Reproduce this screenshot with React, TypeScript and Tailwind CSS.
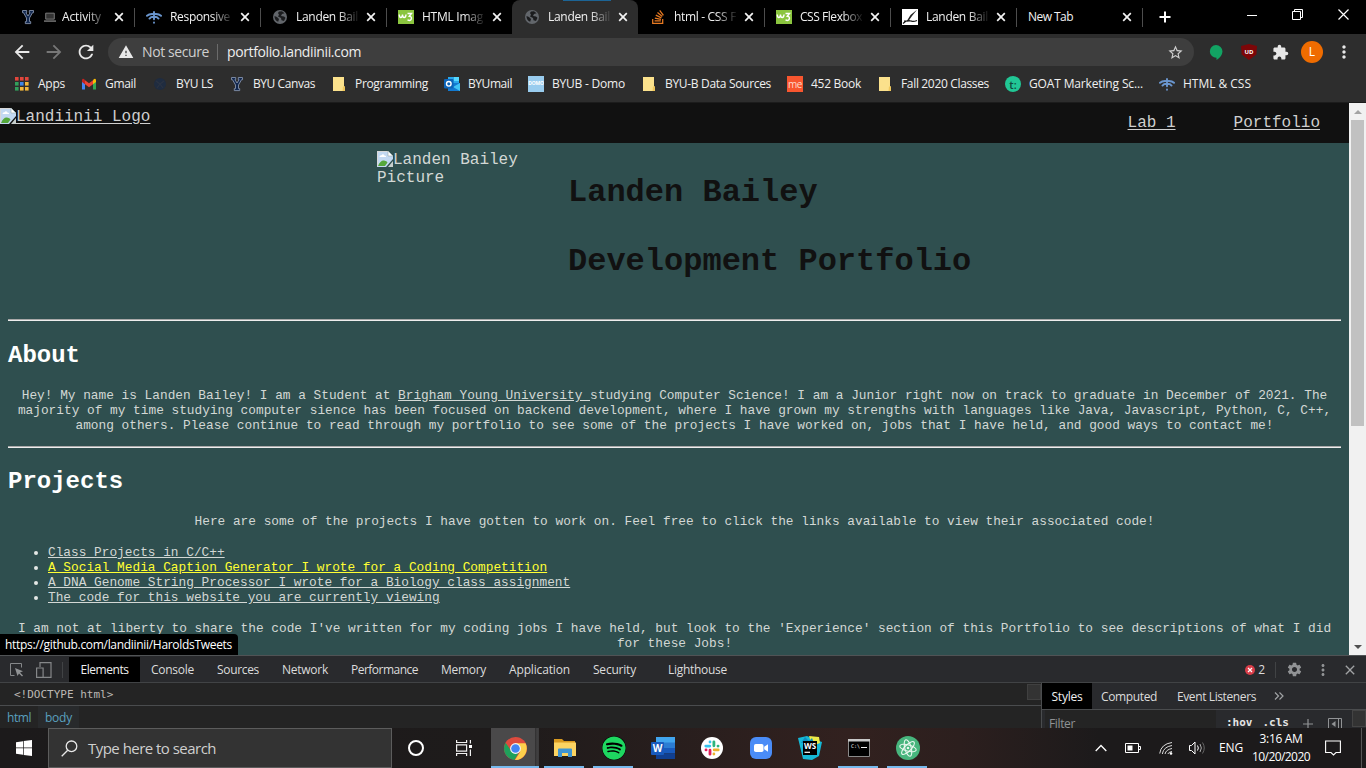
import React, { useLayoutEffect, useRef, useState } from "react";
import { MdArrowBack, MdArrowForward, MdRefresh, MdWarning, MdStarBorder, MdExtension, MdMoreVert, MdSettings, MdClose } from "react-icons/md";
import { FaSpotify, FaStackOverflow } from "react-icons/fa";

/* Spreads a single line of text over the width of its box by adjusting letter spacing. */
function Fit({ children, className = "" }: { children: string; className?: string }) {
  const box = useRef<HTMLSpanElement>(null);
  const text = useRef<HTMLSpanElement>(null);
  const [spacing, setSpacing] = useState(0);
  useLayoutEffect(() => {
    if (!box.current || !text.current) return;
    const natural = text.current.getBoundingClientRect().width;
    const target = box.current.getBoundingClientRect().width;
    setSpacing((target - natural) / children.length);
  }, [children]);
  return (
    <span ref={box} className={`block shrink-0 whitespace-nowrap ${className}`}>
      <span ref={text} style={{ letterSpacing: spacing }}>{children}</span>
    </span>
  );
}

const Yicon = () => (
  <svg viewBox="0 0 16 16" className="h-4 w-4">
    <path d="M2.500 1.500h4.200v2.200h-.8L8 7l2.100-3.300h-.8V1.500h4.200v2.200h-1L9.500 9v3.600h1.200v2H5.300v-2h1.200V9L3.500 3.700h-1z" fill="#12284f" stroke="#8492ab" strokeWidth=".9" />
  </svg>
);
const Signal = () => (
  <svg viewBox="0 0 16 16" className="h-4 w-4" fill="none" stroke="#6a96cf" strokeWidth="1.900" strokeLinecap="round">
    <path d="M1 6.800Q3.500 4.500 8 5.200M15 6.800Q12.500 4.500 8 5.200M3.500 9.600Q5 7.600 8 7.800M12.500 9.600Q11 7.600 8 7.800M8 3v7.200M8 13.500v.3" />
  </svg>
);
const Globe = () => (
  <svg viewBox="0 0 16 16" className="h-4 w-4">
    <circle cx="8" cy="8" r="7" fill="#62666b" />
    <path d="M2.500 7l2.500 1 2 2-.8 2.800C4 12 2.300 9.800 2.500 7zM7 2.600l3-.4 2.600 2-2.600.8-1 2 3 .5 1.500 1.300-1.500 3.200-2.500-.8L9 9 6 7.500l1-1.800L6 4z" fill="#1b1c1e" />
  </svg>
);
const W3 = () => (
  <svg viewBox="0 0 16 16" className="h-4 w-4">
    <rect y="1" width="16" height="14" fill="#8bc53f" />
    <path d="M1.300 5.500q0 3 1.500 3T4.500 5.500q0 3 1.700 3T8 5.500M9.500 4.500h4l-2.200 2.700q2.800.3 2 2.900-.8 2.200-3.800.8" fill="none" stroke="#fff" strokeWidth="1.400" />
  </svg>
);
const Brush = () => (
  <svg viewBox="0 0 16 16" className="h-4 w-4">
    <rect width="16" height="16" fill="#fff" />
    <path d="M1 14.500q4-4 7-2.700t7-.3M2 12h8" fill="none" stroke="#111" strokeWidth="1.200" />
    <path d="M15 .8L8.500 6l-4 6.500 1.800-.3L10 7z" fill="#222" />
  </svg>
);
const Folder = () => (
  <svg viewBox="0 0 16 16" className="h-4 w-4">
    <path d="M2 1h11v9.500h1V15H2z" fill="#fbe18c" />
    <path d="M12 10.500h2V15h-2.500z" fill="#efc75b" />
  </svg>
);
const AppsIcon = () => (
  <svg viewBox="0 0 16 16" className="h-4 w-4">
    {["#e2463c", "#e2463c", "#e2463c", "#32a05b", "#3f86e8", "#f2b63b", "#32a05b", "#f2b63b", "#f2b63b"].map((c, i) => (
      <rect key={i} x={1 + (i % 3) * 5} y={1 + Math.floor(i / 3) * 5} width="3.600" height="3.600" fill={c} />
    ))}
  </svg>
);
const Gmail = () => (
  <svg viewBox="0 0 16 16" className="h-4 w-4">
    <path d="M1 5v8.500h3V7.500z" fill="#4285f4" />
    <path d="M15 5v8.500h-3V7.500z" fill="#34a853" />
    <path d="M4 4.200v4l4 3 4-3v-4l-4 3z" fill="#ea4335" />
    <path d="M1 4.200Q1 2 3 3l1 1.200v4L1 6z" fill="#c5221f" />
    <path d="M15 4.200Q15 2 13 3l-1 1.200v4L15 6z" fill="#fbbc04" />
  </svg>
);
const LsIcon = () => (
  <svg viewBox="0 0 16 16" className="h-4 w-4">
    <circle cx="8" cy="8" r="6" fill="#1f2c40" />
    <path d="M4 5l4 3 4-3M5 12l3-4 3 4" fill="none" stroke="#2b3342" strokeWidth="1.200" />
  </svg>
);
const Outlook = () => (
  <svg viewBox="0 0 16 16" className="h-4 w-4">
    <path d="M4 1h11v7H4z" fill="#2aa7ea" />
    <path d="M10 1h5v4h-5z" fill="#55d8ff" />
    <path d="M4 7h12v8H4z" fill="#1279d0" />
    <path d="M16 7v8l-7-4z" fill="#3fc3f5" />
    <rect y="3" width="9.500" height="9.500" rx="1" fill="#0c64b8" />
    <circle cx="4.800" cy="7.800" r="2.300" fill="none" stroke="#fff" strokeWidth="1.400" />
  </svg>
);
const Domo = () => (
  <span className="flex h-4 w-4 items-center justify-center overflow-hidden bg-[#99ccee] text-[5px] font-bold tracking-[-0.2px] text-white">DOMO</span>
);
const Me = () => (
  <span className="flex h-4 w-4 items-center justify-center overflow-hidden bg-[#f8562f] text-[10px] leading-none tracking-[-0.5px] text-[#ffd8cc]">me</span>
);
const Goat = () => (
  <span className="flex h-4 w-4 items-center justify-center rounded-full bg-[#21c795] text-[11px] leading-none font-semibold text-[#114a3d]">t:</span>
);
const Broken = () => (
  <svg viewBox="0 0 16 16" className="inline-block h-4 w-4 align-baseline">
    <path d="M0 0h11l5 5v3L9 16H0z" fill="#c3d9f2" />
    <path d="M.5 15.500V.5H11" fill="none" stroke="#d8d8d8" />
    <path d="M11 0v5h5z" fill="#fff" stroke="#9aa" strokeWidth=".6" />
    <path d="M2.500 6q0-2 2-1.800Q6 2 7.500 4.500 9.500 4.500 9 6z" fill="#fff" />
    <path d="M1 15q2.500-6 6-5.500 3 .5 3.500 2L8 15z" fill="#55a83c" />
    <path d="M16 10v6h-5z" fill="#c7cfce" />
  </svg>
);

const tabs = [
  { icon: <Yicon />, title: "Activity", w: "w-[39px]", laptop: true, sep: true },
  { icon: <Signal />, title: "Responsive", w: "w-[60px]", sep: true },
  { icon: <Globe />, title: "Landen Bail", w: "w-[62px]", sep: true },
  { icon: <W3 />, title: "HTML Imag", w: "w-[61px]" },
  { icon: <Globe />, title: "Landen Bail", w: "w-[62px]", active: true },
  { icon: <FaStackOverflow className="h-4 w-3.5 text-[#e87a22]" />, title: "html - CSS F", w: "w-[62px]", sep: true },
  { icon: <W3 />, title: "CSS Flexbox", w: "w-[62px]", sep: true },
  { icon: <Brush />, title: "Landen Bail", w: "w-[62px]", sep: true },
  { icon: null, title: "New Tab", w: "w-[45px]", sep: true },
];

const X = ({ className = "" }: { className?: string }) => (
  <svg viewBox="0 0 10 10" className={`h-2.5 w-2.5 shrink-0 ${className}`}><path d="M1.200 1.200l7.600 7.600M8.800 1.200L1.200 8.800" stroke="#f4f4f4" strokeWidth="1.700" /></svg>
);

function TabStrip() {
  return (
    <div className="flex h-[34px] shrink-0 bg-black pl-2">
      {tabs.map((t, i) => (
        <div key={i} className={`relative flex w-[126px] shrink-0 items-center pl-3 ${t.active ? "rounded-t-lg bg-[#2d2d2d]" : ""}`}>
          {t.active && <span className="absolute top-0 left-[51px] h-px w-[48px] bg-[#1c6495]" />}
          {t.icon && <span className="mr-2 flex w-4 shrink-0 justify-center">{t.icon}</span>}
          <span className={`flex w-[62px] items-center ${t.icon ? "[mask-image:linear-gradient(to_right,black_42px,transparent_64px)]" : ""}`}>
            {t.laptop && (
              <svg viewBox="0 0 14 12" className="mr-1.5 h-3 w-3 shrink-0"><path d="M2 1.500h10v7H2z" fill="#333" stroke="#888" /><path d="M0 10h14v1.500H0z" fill="#888" /></svg>
            )}
            <Fit className={`text-[12px] text-[#f1f1f1] ${t.w}`}>{t.title}</Fit>
          </span>
          <X className={t.icon ? "ml-2" : "ml-8"} />
          {t.sep && <span className="absolute top-2 right-[-1px] h-[19px] w-px bg-[#4d4d4d]" />}
        </div>
      ))}
      <div className="flex w-[45px] items-center justify-center">
        <svg viewBox="0 0 12 12" className="h-3 w-3"><path d="M6 .5v11M.5 6h11" stroke="#fff" strokeWidth="2" /></svg>
      </div>
      <div className="ml-auto flex h-[29px] items-center gap-[35px] pr-[17px]">
        <svg viewBox="0 0 10 10" className="h-2.5 w-2.5"><path d="M0 5.500h10" stroke="#fff" /></svg>
        <svg viewBox="0 0 11 11" className="h-[11px] w-[11px]" fill="none" stroke="#fff"><path d="M.5 2.500h8v8h-8zM2.500 2.500v-2h8v8h-2" /></svg>
        <svg viewBox="0 0 11 11" className="h-[11px] w-[11px]"><path d="M.5.5l10 10M10.500.5l-10 10" stroke="#fff" strokeWidth="1.200" /></svg>
      </div>
    </div>
  );
}

function Toolbar() {
  return (
    <div className="flex h-[36px] shrink-0 items-center bg-[#2d2d2d] pl-[11px] text-[#e8e8e8]">
      <MdArrowBack size={22} />
      <MdArrowForward size={22} className="ml-[10px] text-[#777]" />
      <MdRefresh size={22} className="ml-[10px]" />
      <div className="ml-[11px] flex h-7 w-[1086px] items-center rounded-full bg-[#3e3e3e] pl-[10px] text-[14px]">
        <MdWarning size={16} />
        <Fit className="-mt-px ml-2 w-[67px] text-[#cfcfcf]">Not secure</Fit>
        <span className="mr-[9px] ml-2 h-4 w-px bg-[#6b6b6b]" />
        <Fit className="-mt-px w-[134px] text-[#ededed]">portfolio.landiinii.com</Fit>
        <MdStarBorder size={17} className="mr-[10px] ml-auto text-[#cfcfcf]" />
      </div>
      <svg viewBox="0 0 14 17" className="ml-[15px] h-[17px] w-3.5"><path d="M7 1a6.500 6.500 0 0 1 6.500 6.500Q13 13 7.500 16v-2.200A6.400 6.400 0 1 1 7 1z" fill="#12a363" /></svg>
      <span className="ml-[18px] flex h-4 w-4 items-center justify-center bg-[#7c0608] text-[6px] font-bold text-white [clip-path:polygon(0_12%,50%_0,100%_12%,96%_65%,50%_100%,4%_65%)]">UD</span>
      <MdExtension size={17} className="ml-[15px]" />
      <span className="ml-3 flex h-[22px] w-[22px] items-center justify-center rounded-full bg-[#ef6c00] text-[12px] text-white">L</span>
      <MdMoreVert size={20} className="ml-[11px]" />
    </div>
  );
}

const bookmarks = [
  { icon: <AppsIcon />, t: "Apps", w: "w-[27px]" },
  { icon: <Gmail />, t: "Gmail", w: "w-[31px]" },
  { icon: <LsIcon />, t: "BYU LS", w: "w-[37px]" },
  { icon: <Yicon />, t: "BYU Canvas", w: "w-[62px]" },
  { icon: <Folder />, t: "Programming", w: "w-[73px]" },
  { icon: <Outlook />, t: "BYUmail", w: "w-[44px]" },
  { icon: <Domo />, t: "BYUB - Domo", w: "w-[73px]" },
  { icon: <Folder />, t: "BYU-B Data Sources", w: "w-[106px]" },
  { icon: <Me />, t: "452 Book", w: "w-[50px]" },
  { icon: <Folder />, t: "Fall 2020 Classes", w: "w-[88px]" },
  { icon: <Goat />, t: "GOAT Marketing Sc...", w: "w-[114px]" },
  { icon: <Signal />, t: "HTML & CSS", w: "w-[68px]" },
];

function Bookmarks() {
  return (
    <div className="flex h-[33px] shrink-0 items-center gap-4 border-b border-[#1c1c1c] bg-[#2d2d2d] pb-1 pl-3.5 text-[12px] text-[#f0f0f0]">
      {bookmarks.map((b) => (
        <div key={b.t} className="flex shrink-0 items-center gap-2">{b.icon}<Fit className={b.w}>{b.t}</Fit></div>
      ))}
    </div>
  );
}

const Rule = () => <hr className="h-[2px] border-0 border-t border-b border-t-[#a8a8a8] border-b-[#eeeeee]" />;

function Site() {
  return (
    <div className="relative flex h-[552px] shrink-0 overflow-hidden bg-[#2f4f4f] font-['Courier_New','Liberation_Mono',monospace] text-[#d3d8d5]">
      <div className="w-[1349px] shrink-0">
        <header className="flex h-10 justify-between bg-[#111] text-[16px] leading-[18px] text-[#cfcfcf]">
          <a className="flex pt-[5px] underline underline-offset-2"><Broken /><span>Landiinii Logo</span></a>
          <nav className="flex gap-[58px] pt-[11px] pr-[29px]">
            <a className="underline underline-offset-2">Lab 1</a>
            <a className="underline underline-offset-2">Portfolio</a>
          </nav>
        </header>
        <div className="px-2">
          <section className="flex h-[176px] pl-[369px]">
            <div className="w-[191px] pt-2 text-[16px] leading-[18px]">
              <div className="flex"><Broken /><span>Landen Bailey</span></div>
              <div>Picture</div>
            </div>
            <div className="pt-8 text-[32px] leading-9 font-bold text-[#111]">
              <h1>Landen Bailey</h1>
              <h1 className="mt-[33px]">Development Portfolio</h1>
            </div>
          </section>
          <Rule />
          <h2 className="mt-[21px] text-[24px] leading-[27px] font-bold text-white">About</h2>
          <p className="mt-[19px] text-center text-[12.8px] leading-[15px]">
            Hey! My name is Landen Bailey! I am a Student at <a className="underline">Brigham Young University </a>studying Computer Science! I am a Junior right now on track to graduate in December of 2021. The majority of my time studying computer sience has been focused on backend development, where I have grown my strengths with languages like Java, Javascript, Python, C, C++, among others. Please continue to read through my portfolio to see some of the projects I have worked on, jobs that I have held, and good ways to contact me!
          </p>
          <div className="mt-[13px]"><Rule /></div>
          <h2 className="mt-5 text-[24px] leading-[27px] font-bold text-white">Projects</h2>
          <p className="mt-[19px] text-center text-[12.8px] leading-[15px]">Here are some of the projects I have gotten to work on. Feel free to click the links available to view their associated code!</p>
          <ul className="mt-4 text-[12.8px] leading-[15px]">
            {[
              "Class Projects in C/C++",
              "A Social Media Caption Generator I wrote for a Coding Competition",
              "A DNA Genome String Processor I wrote for a Biology class assignment",
              "The code for this website you are currently viewing",
            ].map((t, i) => (
              <li key={t} className="flex items-center pl-[26px]">
                <span className="mr-[10px] h-1 w-1 rounded-full bg-[#e4e8e6]" />
                <a className={i === 1 ? "text-[#ffff33] underline" : "underline"}>{t}</a>
              </li>
            ))}
          </ul>
          <p className="mt-4 text-center text-[12.8px] leading-[15px]">I am not at liberty to share the code I've written for my coding jobs I have held, but look to the 'Experience' section of this Portfolio to see descriptions of what I did for these Jobs!</p>
        </div>
      </div>
      <div className="flex w-[17px] flex-col items-center bg-[#f1f1f1]">
        <span className="flex h-[17px] items-center"><svg viewBox="0 0 8 4" className="h-1 w-2"><path d="M0 4l4-4 4 4z" fill="#a3a3a3" /></svg></span>
        <span className="h-[306px] w-[13px] bg-[#c1c1c1]" />
        <span className="mt-auto flex h-[17px] items-center"><svg viewBox="0 0 8 4" className="h-1 w-2"><path d="M0 0l4 4 4-4z" fill="#505050" /></svg></span>
      </div>
      <div className="absolute bottom-0 left-0 flex h-[21px] w-[238px] items-center rounded-tr bg-black pl-[5px] font-['Open_Sans','Noto_Sans',sans-serif] text-[12px] text-white">
        <Fit className="w-[227px]">https://github.com/landiinii/HaroldsTweets</Fit>
      </div>
    </div>
  );
}

const devTabs = [
  ["Console", "w-[43px]", "ml-[11px]"],
  ["Sources", "w-[42px]", "ml-[23px]"],
  ["Network", "w-[46px]", "ml-[23px]"],
  ["Performance", "w-[67px]", "ml-[23px]"],
  ["Memory", "w-[45px]", "ml-[23px]"],
  ["Application", "w-[61px]", "ml-[23px]"],
  ["Security", "w-[43px]", "ml-[23px]"],
  ["Lighthouse", "w-[59px]", "ml-[32px]"],
];

function DevTools() {
  return (
    <div className="flex h-[73px] shrink-0 flex-col overflow-hidden border-t border-[#505355] bg-[#242424] text-[12px] text-[#dcdcdc]">
      <div className="flex h-[27px] shrink-0 items-center border-b border-[#414345] bg-[#292a2d] pt-px">
        <svg viewBox="0 0 14 14" className="ml-[10px] h-3.5 w-3.5"><path d="M4.500 12.500h-4V.5h11v4" fill="none" stroke="#858789" /><path d="M5 5l8 3.200-3 1.300 3 3-1 1-3-3L7.500 13z" fill="#919395" /></svg>
        <svg viewBox="0 0 16 16" className="ml-3 h-4 w-4" fill="none" stroke="#858789" strokeWidth="1.200"><path d="M4 5V.6h11v14.800H7.500M.6 6h6.500v9.400H.6z" /></svg>
        <span className="ml-[10px] h-4 w-px bg-[#414345]" />
        <div className="ml-[6px] flex h-full w-[71px] items-center justify-center bg-black pt-px"><Fit className="w-[48px] text-[#f0f0f0]">Elements</Fit></div>
        {devTabs.map(([t, w, m]) => <Fit key={t} className={`pt-px ${w} ${m}`}>{t}</Fit>)}
        <svg viewBox="0 0 10 10" className="ml-auto h-2.5 w-2.5"><circle cx="5" cy="5" r="5" fill="#d93d49" /><path d="M3 3l4 4M7 3L3 7" stroke="#fff" strokeWidth="1.200" /></svg>
        <span className="ml-[3px] pt-px">2</span>
        <span className="ml-[10px] h-4 w-px bg-[#414345]" />
        <MdSettings size={17} className="ml-[10px] text-[#919395]" />
        <MdMoreVert size={18} className="ml-[11px] text-[#919395]" />
        <MdClose size={16} className="mr-2 ml-[10px] text-[#a0a2a4]" />
      </div>
      <div className="flex h-[46px]">
        <div className="flex w-[1042px] shrink-0 flex-col border-r border-[#4a4c4e]">
          <div className="flex h-[23px] justify-between border-b border-[#4a4c4e] font-['DejaVu_Sans_Mono',monospace] text-[11px] leading-[23px] text-[#bdb9b4]">
            <span className="pl-3.5">&lt;!DOCTYPE html&gt;</span>
            <span className="mt-px h-4 w-[14px] border border-[#404040] bg-[#333]" />
          </div>
          <div className="flex h-[23px] items-center text-[#5aa0bf]">
            <Fit className="ml-[7px] w-[24px] pt-px">html</Fit>
            <span className="ml-[7px] flex h-full w-[41px] items-center justify-center bg-[#282a2c] pt-px"><Fit className="w-[27px]">body</Fit></span>
          </div>
        </div>
        <div className="flex flex-1 flex-col bg-[#292a2d]">
          <div className="flex h-[27px] shrink-0 items-center border-b border-[#4a4c4e]">
            <span className="flex h-full w-[50px] items-center justify-center bg-black pt-0.5"><Fit className="w-[31px] text-[#f0f0f0]">Styles</Fit></span>
            <Fit className="ml-[9px] w-[56px] pt-0.5">Computed</Fit>
            <Fit className="ml-5 w-[79px] pt-0.5">Event Listeners</Fit>
            <svg viewBox="0 0 10 8" className="ml-[18px] h-2 w-2.5" fill="none" stroke="#a0a2a4" strokeWidth="1.200"><path d="M1 .5L4.500 4 1 7.500M5.500.5L9 4 5.500 7.500" /></svg>
          </div>
          <div className="flex h-[27px] shrink-0 items-center pl-[3px] font-['DejaVu_Sans_Mono',monospace] text-[11px] font-bold text-[#e4e4e4]">
            <span className="flex h-[27px] w-[171px] items-center bg-[#242424] pt-px pl-1 font-['Open_Sans','Noto_Sans',sans-serif] text-[12px] font-normal text-[#8f9193]"><Fit className="w-[26px]">Filter</Fit></span>
            <span className="ml-[10px]">:hov</span>
            <span className="ml-[10px]">.cls</span>
            <svg viewBox="0 0 10 10" className="ml-[14px] h-2.5 w-2.5"><path d="M5 0v10M0 5h10" stroke="#919395" strokeWidth="1.200" /></svg>
            <svg viewBox="0 0 14 12" className="ml-[15px] h-3 w-3.5" fill="none" stroke="#919395"><path d="M.5.5h13v11H.5zM10.500.5v11" /><path d="M7.500 3v6l-4-3z" fill="#919395" stroke="none" /></svg>
            <span className="ml-[10px] h-[17px] w-[14px] self-start border border-[#444] bg-[#333]" />
          </div>
        </div>
      </div>
    </div>
  );
}

const Chrome = () => (
  <svg viewBox="0 0 22 22" className="h-[23px] w-[23px]">
    <circle cx="11" cy="11" r="11" fill="#dd4b3e" />
    <path d="M1.500 5.500A11 11 0 0 0 10 22l5-8.700H7z" fill="#1fa05b" />
    <path d="M20.600 6H11l4.500 8-5 8A11 11 0 0 0 20.600 6z" fill="#fdd04b" />
    <circle cx="11" cy="11" r="5.200" fill="#f3f3f3" /><circle cx="11" cy="11" r="4.100" fill="#4285f4" />
  </svg>
);
const Explorer = () => (
  <svg viewBox="0 0 22 20" className="h-5 w-[22px]">
    <path d="M0 1h8l2 2h11v5H0z" fill="#d99a20" /><path d="M0 4.500h22V18H0z" fill="#fcd462" />
    <path d="M4 19v-7.500q0-1 1-1h12q1 0 1 1V19h-4v-4H8v4z" fill="#3f95d2" />
  </svg>
);
const Word = () => (
  <svg viewBox="0 0 24 22" className="h-[22px] w-6">
    <path d="M5 0h19v6H5z" fill="#41a5ee" /><path d="M5 5.500h19V11H5z" fill="#2b7cd3" /><path d="M5 11h19v5.500H5z" fill="#185abd" /><path d="M5 16.500h19V22H5z" fill="#103f91" />
    <rect y="5" width="13" height="13" rx="1" fill="#185abd" />
    <text x="6.500" y="15" textAnchor="middle" fontFamily="Open Sans" fontSize="10" fontWeight="bold" fill="#fff">W</text>
  </svg>
);
const Slack = () => (
  <svg viewBox="0 0 22 22" className="h-[22px] w-[22px]">
    <circle cx="11" cy="11" r="11" fill="#fff" />
    <g strokeWidth="2.800" strokeLinecap="round" fill="none">
      <path d="M4.800 9.100h4M9 5v.1" stroke="#36c5f0" /><path d="M12.900 4.800v4M17 9.100h.1" stroke="#2eb67d" />
      <path d="M17.200 12.900h-4M12.900 17v.1" stroke="#ecb22e" /><path d="M9 17.200v-4M5 12.900h.1" stroke="#e01e5a" />
    </g>
  </svg>
);
const Zoom = () => (
  <svg viewBox="0 0 22 22" className="h-[22px] w-[22px]"><rect width="22" height="22" rx="6" fill="#4a8cf7" /><rect x="4" y="7" width="9.500" height="8" rx="1.800" fill="#fff" /><path d="M14.200 9.800L18 7.200v7.600l-3.800-2.600z" fill="#fff" /></svg>
);
const WebStorm = () => (
  <svg viewBox="0 0 24 24" className="h-6 w-6">
    <path d="M0 2l9-2 9 4 6 2-3 14-7 4-9-1z" fill="#15b8d6" /><path d="M11 0l10 1 1 6-8 3z" fill="#ecea48" /><path d="M7 1l4 4 3-3 2 5H3z" fill="#0e8fbf" />
    <path d="M5 5h14v14H5z" fill="#000" /><path d="M6.500 16.300h5.500" stroke="#fff" strokeWidth="1.200" />
    <text x="12" y="12.800" textAnchor="middle" fontFamily="Open Sans" fontSize="8" fontWeight="bold" fill="#fff">WS</text>
  </svg>
);
const Cmd = () => (
  <svg viewBox="0 0 22 18" className="h-[18px] w-[22px]"><path d="M.5.5h21v17H.5z" fill="#000" stroke="#8a8a8a" /><path d="M0 0h22v2.500H0z" fill="#c8c8c8" /><text x="3" y="9" fontFamily="DejaVu Sans Mono" fontSize="5" fill="#eee">C:\</text><path d="M13 8.500h6" stroke="#eee" /></svg>
);
const Atom = () => (
  <svg viewBox="0 0 24 24" className="h-6 w-6"><circle cx="12" cy="12" r="12" fill="#47b57d" /><g fill="none" stroke="#e8f7ee" strokeWidth="1.100"><ellipse cx="12" cy="12" rx="8.500" ry="3.200" transform="rotate(15 12 12)" /><ellipse cx="12" cy="12" rx="8.500" ry="3.200" transform="rotate(75 12 12)" /><ellipse cx="12" cy="12" rx="8.500" ry="3.200" transform="rotate(135 12 12)" /></g><circle cx="12" cy="12" r="1.300" fill="#e8f7ee" /></svg>
);

const apps = [
  { icon: <Chrome />, active: true },
  { icon: <Explorer />, open: true },
  { icon: <FaSpotify className="h-6 w-6 rounded-full bg-black text-[#1ed760]" />, open: true },
  { icon: <Word /> },
  { icon: <Slack /> },
  { icon: <Zoom /> },
  { icon: <WebStorm /> },
  { icon: <Cmd />, open: true },
  { icon: <Atom />, open: true },
];

function Taskbar() {
  return (
    <div className="flex h-10 shrink-0 items-center bg-[linear-gradient(to_right,#1c1a1b_0,#1e1b1b_500px,#32211f_850px,#2c1f1e_960px,#1c1a1b_1100px)] text-white">
      <div className="flex w-12 justify-center">
        <svg viewBox="0 0 16 16" className="h-4 w-4"><path d="M0 2.300L7 1.200v6.300H0zM7.700 1.100L16 0v7.500H7.700zM0 8.300h7v6.500L0 13.800zM7.700 8.300H16V16l-8.300-1.100z" fill="#fff" /></svg>
      </div>
      <div className="flex h-10 w-[344px] items-center border border-[#5c5c5c] bg-[#333] pl-3">
        <svg viewBox="0 0 17 17" className="h-[17px] w-[17px]" fill="none" stroke="#e8e8e8" strokeWidth="1.300"><circle cx="10.500" cy="6.300" r="5.300" /><path d="M6.700 10.200L.7 16.300" /></svg>
        <Fit className="ml-[10px] w-[128px] text-[15px] text-[#cfcfcf]">Type here to search</Fit>
      </div>
      <div className="flex w-12 justify-center"><span className="h-4 w-4 rounded-full border-2 border-white" /></div>
      <div className="flex w-[51px] justify-center pr-[3px]">
        <svg viewBox="0 0 16 16" className="h-4 w-4" fill="none" stroke="#f0f0f0" strokeWidth="1.200"><path d="M.6 0v2.500h10V0M.6 4.800h10v6.400H.6zM.6 16v-2.500h10V16M14.400 0v3.500M14.400 9.500V16" /><path d="M13 5h3v3h-3z" fill="#fff" stroke="none" /></svg>
      </div>
      {apps.map((a, i) => (
        <div key={i} className={`relative flex h-10 w-[49px] shrink-0 items-center justify-center ${a.active ? "bg-[linear-gradient(to_right,#4a494a_0,#4a494a_44px,#2f2e2f_44px,#414041_46px,#3c3b3c_48px,transparent_48px)]" : ""}`}>
          {a.icon}
          {(a.open || a.active) && <span className={`absolute bottom-0 h-0.5 bg-[#76b9ed] ${a.active ? "left-0 w-12" : "left-[4px] w-10"}`} />}
        </div>
      ))}
      <div className="ml-auto flex items-center">
        <svg viewBox="0 0 12 8" className="h-2 w-3"><path d="M.7 7L6 1.500 11.300 7" fill="none" stroke="#fff" strokeWidth="1.300" /></svg>
        <svg viewBox="0 0 16 10" className="ml-[18px] h-2.5 w-4"><path d="M.5.5h13v9H.5zM14 3.500h1.500v3H14" fill="none" stroke="#fff" /><path d="M2.500 2.500h5v5h-5z" fill="#fff" /></svg>
        <svg viewBox="0 0 14 14" className="ml-[18px] h-3.5 w-3.5" fill="none" stroke="#ddd"><path d="M.7 12.500Q2 3 13 1.500M3.300 13Q4.500 5.800 13 4.500M6 13Q7 8.500 13 7.500M8.800 13Q9.500 11 13 10.500" /><circle cx="12" cy="12.500" r="1.300" fill="#fff" stroke="none" /></svg>
        <svg viewBox="0 0 17 14" className="ml-4 h-3.5 w-[17px]" fill="none" stroke="#fff"><path d="M.5 4.500h2l3.500-3.500v12l-3.500-3.500h-2z" /><path d="M8.500 4.500q1.700 2.500 0 5" /><path d="M11 3q2.700 4 0 8" stroke="#aaa" /><path d="M13.500 1.500q3.500 5.500 0 11" stroke="#666" /></svg>
        <Fit className="ml-[13px] w-[24px] text-[12px]">ENG</Fit>
        <div className="ml-2 flex w-[60px] flex-col items-center text-[12px] leading-[18px]">
          <Fit className="w-[43px]">3:16 AM</Fit>
          <Fit className="w-[58px]">10/20/2020</Fit>
        </div>
        <svg viewBox="0 0 16 16" className="ml-[14px] h-4 w-4"><path d="M.6 1h14.800v11.500h-4.400L8.500 15 6 12.500H.6z" fill="none" stroke="#fff" strokeWidth="1.100" /></svg>
        <span className="mr-1 ml-5 h-10 w-px bg-[#555]" />
      </div>
    </div>
  );
}

export default function App() {
  return (
    <div className="flex h-[768px] w-[1366px] flex-col overflow-hidden bg-black font-['Open_Sans','Noto_Sans',sans-serif]">
      <TabStrip />
      <Toolbar />
      <Bookmarks />
      <Site />
      <DevTools />
      <Taskbar />
    </div>
  );
}
